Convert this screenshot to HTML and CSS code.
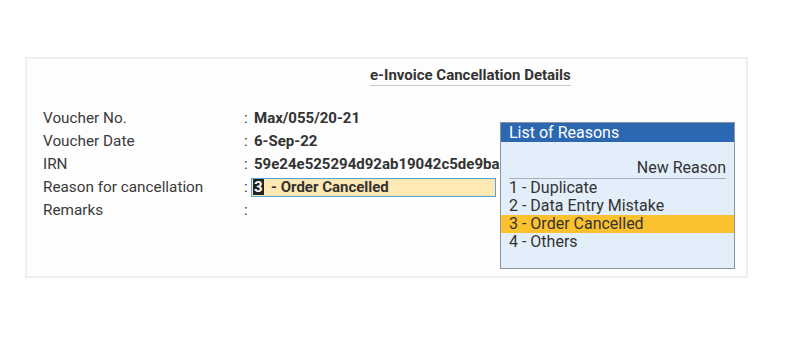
FILE: index.html
```html
<!DOCTYPE html>
<html>

<head>
  <meta charset="UTF-8">
  <meta name="viewport" content="width=device-width, initial-scale=1.0">
  <title>e-Invoice Cancellation Details</title>
  <link rel="stylesheet" href="styles.css">
</head>

<body>

  <div class="panel">
    <div class="title-row">
      <span class="title">e-Invoice Cancellation Details</span>
    </div>

    <div class="fields">
      <div class="row">
        <span class="label">Voucher No.</span>
        <span class="colon">:</span>
        <span class="value">Max/055/20-21</span>
      </div>
      <div class="row">
        <span class="label">Voucher Date</span>
        <span class="colon">:</span>
        <span class="value">6-Sep-22</span>
      </div>
      <div class="row">
        <span class="label">IRN</span>
        <span class="colon">:</span>
        <span class="value">59e24e525294d92ab19042c5de9ba1f07c3e</span>
      </div>
      <div class="row">
        <span class="label">Reason for cancellation</span>
        <span class="colon">:</span>
        <span class="input"><span class="cursor">3</span>  - Order Cancelled</span>
      </div>
      <div class="row">
        <span class="label">Remarks</span>
        <span class="colon">:</span>
        <span class="value"></span>
      </div>
    </div>

    <div class="reasons">
      <div class="reasons-head">List of Reasons</div>
      <div class="reasons-sub">New Reason</div>
      <ul class="reasons-list">
        <li>1 - Duplicate</li>
        <li>2 - Data Entry Mistake</li>
        <li class="selected">3 - Order Cancelled</li>
        <li>4 - Others</li>
      </ul>
    </div>
  </div>

</body>

</html>
```

FILE: styles.css
```css
body {
  margin: 0;
  background-color: #fff;
  font-family: Roboto, "Liberation Sans", sans-serif;
  font-size: 15px;
  color: #333;
}

.panel {
  position: relative;
  margin: 57px 0 0 25px;
  width: 719px;
  height: 217px;
  border: 2px solid #efefef;
  background-color: #fdfdfd;
  overflow: hidden;
}

.title-row {
  padding: 6px 0 0 343px;
}

.title {
  display: inline-block;
  line-height: 20px;
  font-weight: bold;
  color: #333;
  border-bottom: 1px solid #c8c8c8;
}

.fields {
  margin-top: 20px;
  padding-left: 16px;
}

.row {
  display: flex;
  align-items: center;
  height: 23.2px;
  white-space: nowrap;
}

.label {
  width: 201px;
  font-size: 15.3px;
  color: #3a3a3a;
}

.colon {
  width: 10px;
}

.value {
  font-weight: bold;
  color: #333;
}

.input {
  display: flex;
  align-items: center;
  width: 242px;
  height: 17px;
  margin-left: -3px;
  padding-left: 1px;
  border: 1px solid #5ba3d4;
  background-color: #fee8b4;
  font-weight: bold;
  white-space: pre;
}

.cursor {
  display: inline-block;
  padding: 0 1px;
  line-height: 16px;
  background-color: #222;
  color: #fff;
}

.reasons {
  position: absolute;
  left: 473px;
  top: 63px;
  width: 233px;
  height: 145px;
  border: 1px solid #8b939c;
  background-color: #e2eefa;
  font-size: 16px;
}

.reasons-head {
  height: 19px;
  line-height: 19px;
  padding-left: 8px;
  background-color: #2b68b1;
  color: #fff;
}

.reasons-sub {
  margin: 17px 8px 0 8px;
  padding-bottom: 1px;
  line-height: 18px;
  text-align: right;
  border-bottom: 1px solid #a9b0b8;
}

.reasons-list {
  list-style: none;
  margin: 0;
  padding: 0;
}

.reasons-list li {
  height: 18px;
  line-height: 18px;
  padding-left: 8px;
}

.reasons-list li.selected {
  background-color: #fcc12e;
}
```
